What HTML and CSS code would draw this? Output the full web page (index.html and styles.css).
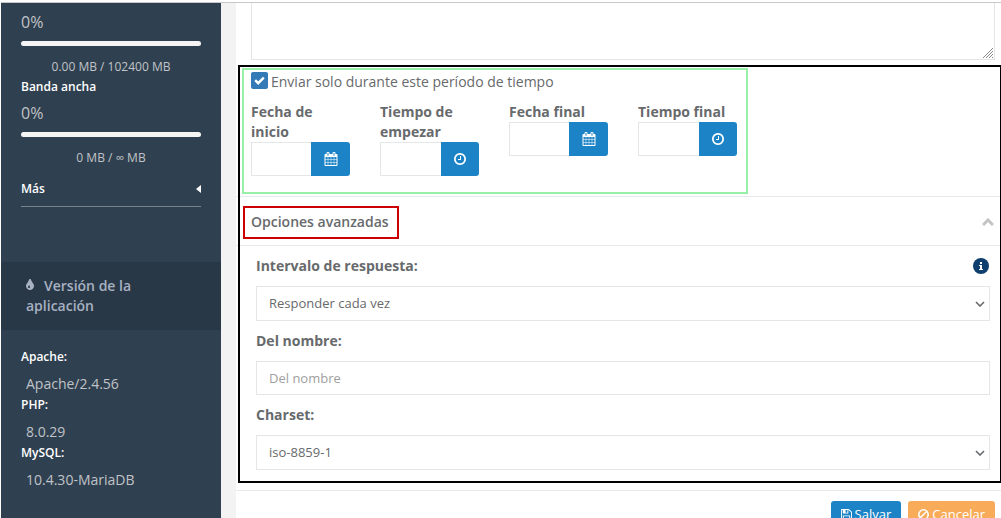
FILE: index.html
```
<!DOCTYPE html>
<html lang="es">
<head>
    <meta charset="UTF-8">
    <title>Respuesta automática</title>
    <link rel="stylesheet" href="styles.css">
</head>
<body>
    <!-- Shared icons -->
    <svg class="sprite" aria-hidden="true">
        <symbol id="icon-calendar" viewBox="0 0 1792 1792">
            <path d="M192 1664h288v-288h-288v288zm352 0h320v-288h-320v288zm-352-352h288v-320h-288v320zm352 0h320v-320h-320v320zm-352-384h288v-288h-288v288zm736 736h320v-288h-320v288zm-384-736h320v-288h-320v288zm768 736h288v-288h-288v288zm-384-352h320v-320h-320v320zm-352-864v-288q0-13-9.5-22.5t-22.5-9.5h-64q-13 0-22.5 9.5t-9.5 22.5v288q0 13 9.5 22.5t22.5 9.5h64q13 0 22.5-9.5t9.5-22.5zm736 864h288v-320h-288v320zm-384-384h320v-288h-320v288zm384 0h288v-288h-288v288zm32-480v-288q0-13-9.5-22.5t-22.5-9.5h-64q-13 0-22.5 9.5t-9.5 22.5v288q0 13 9.5 22.5t22.5 9.5h64q13 0 22.5-9.5t9.5-22.5zm384-64v1280q0 52-38 90t-90 38h-1408q-52 0-90-38t-38-90v-1280q0-52 38-90t90-38h128v-96q0-66 47-113t113-47h64q66 0 113 47t47 113v96h384v-96q0-66 47-113t113-47h64q66 0 113 47t47 113v96h128q52 0 90 38t38 90z"/>
        </symbol>
        <symbol id="icon-clock" viewBox="0 0 1792 1792">
            <path d="M1024 544v448q0 14-9 23t-23 9h-320q-14 0-23-9t-9-23v-64q0-14 9-23t23-9h224v-352q0-14 9-23t23-9h64q14 0 23 9t9 23zm416 352q0-148-73-273t-198-198-273-73-273 73-198 198-73 273 73 273 198 198 273 73 273-73 198-198 73-273zm224 0q0 209-103 385.5t-279.5 279.5-385.5 103-385.5-103-279.5-279.5-103-385.5 103-385.5 279.5-279.5 385.5-103 385.5 103 279.5 279.5 103 385.5z"/>
        </symbol>
        <symbol id="icon-save" viewBox="128 128 1536 1536">
            <path d="M512 1536h768v-384h-768v384zm896 0h128v-896q0-14-10-38.5t-20-34.5l-281-281q-10-10-34-20t-39-10v416q0 40-28 68t-68 28h-576q-40 0-68-28t-28-68v-416h-128v1280h128v-416q0-40 28-68t68-28h832q40 0 68 28t28 68v416zm-384-928v-320q0-13-9.5-22.5t-22.5-9.5h-192q-13 0-22.5 9.5t-9.5 22.5v320q0 13 9.5 22.5t22.5 9.5h192q13 0 22.5-9.5t9.5-22.5zm640 32v928q0 40-28 68t-68 28h-1344q-40 0-68-28t-28-68v-1344q0-40 28-68t68-28h928q40 0 88 20t76 48l280 280q28 28 48 76t20 88z"/>
        </symbol>
        <symbol id="icon-tint" viewBox="384 128 1024 1536">
            <path d="M896 1152q0-36-20-69-1-1-15.5-22.5t-25.5-38-25-44-21-50.5q-4-16-21-16t-21 16q-7 23-21 50.5t-25 44-25.5 38-15.5 22.5q-20 33-20 69 0 53 37.5 90.5t90.5 37.5 90.5-37.5 37.5-90.5zm512-128q0 212-150 362t-362 150-362-150-150-362q0-145 81-275 6-9 62.5-90.5t101-151 99.5-178 83-201.5q9-30 34-47t51-17 51.5 17 33.5 47q28 93 83 201.5t99.5 178 101 151 62.5 90.5q81 127 81 275z"/>
        </symbol>
        <symbol id="icon-ban" viewBox="0 0 12 12">
            <path d="M6 .9a5.1 5.1 0 1 0 0 10.2A5.1 5.1 0 0 0 6 .9zM9.6 2.4L2.4 9.6" fill="none" stroke="currentColor" stroke-width="1.7"/>
        </symbol>
        <symbol id="icon-arrow" viewBox="0 0 10 6">
            <path d="M1 1l4 4 4-4" fill="none" stroke="currentColor" stroke-width="1.6"/>
        </symbol>
    </svg>

    <div class="page">
        <!-- Sidebar -->
        <aside class="sidebar">
            <section class="stats">
                <div class="stat-value">0%</div>
                <div class="stat-bar"></div>
                <div class="stat-text">0.00 MB / 102400 MB</div>
                <div class="stat-title">Banda ancha</div>
                <div class="stat-value">0%</div>
                <div class="stat-bar"></div>
                <div class="stat-text">0 MB / ∞ MB</div>
                <a href="#" class="more">Más
                    <svg class="caret" viewBox="0 0 5 8"><path d="M5 0v8L0 4z"/></svg>
                </a>
            </section>
            <h2 class="version-title"><svg class="icon tint"><use href="#icon-tint"/></svg>Versión de la aplicación</h2>
            <dl class="versions">
                <dt>Apache:</dt>
                <dd>Apache/2.4.56</dd>
                <dt>PHP:</dt>
                <dd>8.0.29</dd>
                <dt>MySQL:</dt>
                <dd>10.4.30-MariaDB</dd>
            </dl>
        </aside>

        <!-- Autoresponder form -->
        <form class="content">
            <div class="message">
                <textarea aria-label="Mensaje"></textarea>
                <svg class="grip" viewBox="0 0 10 10"><path d="M0 10L10 0M3 10l7-7M6 10l4-4M9 10l1-1"/></svg>
            </div>

            <div class="highlight">
                <section class="period">
                    <div class="check-row">
                        <span class="check">
                            <input type="checkbox" id="onlyPeriod" checked>
                            <svg class="tick" viewBox="0 0 11 9"><path d="M1.2 4.2l3 3L9.8 1.6"/></svg>
                        </span>
                        <label for="onlyPeriod">Enviar solo durante este período de tiempo</label>
                    </div>
                    <div class="period-fields">
                        <div class="field">
                            <label for="startDate">Fecha de inicio</label>
                            <div class="input-group">
                                <input type="text" id="startDate">
                                <button type="button" aria-label="Elegir fecha"><svg class="icon"><use href="#icon-calendar"/></svg></button>
                            </div>
                        </div>
                        <div class="field">
                            <label for="startTime">Tiempo de empezar</label>
                            <div class="input-group">
                                <input type="text" id="startTime">
                                <button type="button" class="time" aria-label="Elegir hora"><svg class="icon"><use href="#icon-clock"/></svg></button>
                            </div>
                        </div>
                        <div class="field">
                            <label for="endDate">Fecha final</label>
                            <div class="input-group">
                                <input type="text" id="endDate">
                                <button type="button" aria-label="Elegir fecha"><svg class="icon"><use href="#icon-calendar"/></svg></button>
                            </div>
                        </div>
                        <div class="field">
                            <label for="endTime">Tiempo final</label>
                            <div class="input-group">
                                <input type="text" id="endTime">
                                <button type="button" class="time" aria-label="Elegir hora"><svg class="icon"><use href="#icon-clock"/></svg></button>
                            </div>
                        </div>
                    </div>
                </section>

                <div class="advanced-header">
                    <h3>Opciones avanzadas</h3>
                    <svg class="chevron" viewBox="0 0 12 8"><path d="M1 7l5-5 5 5"/></svg>
                </div>

                <section class="advanced">
                    <div class="label-row">
                        <label for="interval">Intervalo de respuesta:</label>
                        <svg class="info" viewBox="0 0 16 16">
                            <circle cx="8" cy="8" r="8"/>
                            <path d="M7 4h2v2H7zM6 7h3v4h1v1H6v-1h1V8H6z"/>
                        </svg>
                    </div>
                    <div class="select">
                        <select id="interval">
                            <option>Responder cada vez</option>
                        </select>
                        <svg class="arrow"><use href="#icon-arrow"/></svg>
                    </div>
                    <div class="label-row">
                        <label for="fromName">Del nombre:</label>
                    </div>
                    <input type="text" id="fromName" placeholder="Del nombre">
                    <div class="label-row">
                        <label for="charset">Charset:</label>
                    </div>
                    <div class="select">
                        <select id="charset">
                            <option>iso-8859-1</option>
                        </select>
                        <svg class="arrow"><use href="#icon-arrow"/></svg>
                    </div>
                </section>
            </div>

            <div class="actions">
                <button type="submit" class="save"><svg class="icon"><use href="#icon-save"/></svg>Salvar</button>
                <button type="button" class="cancel"><svg class="icon"><use href="#icon-ban"/></svg>Cancelar</button>
            </div>
        </form>
    </div>
</body>
</html>
```

FILE: styles.css
```
*, *::after {
    box-sizing: border-box;
}
body {
    margin: 0;
    padding: 2px 0 0 1px;
    height: 100vh;
    overflow: hidden;
    background-color: #fff;
    color: #676a6c;
    font-family: "Open Sans", "Noto Sans", sans-serif;
    font-size: 14px;
    line-height: 20px;
}
input, select, textarea, button {
    font-family: inherit;
    font-size: 13px;
    color: inherit;
}
svg {
    fill: currentColor;
}
.sprite {
    display: none;
}
.page {
    display: flex;
    min-height: 100%;
    border-top: 1px solid #c8c8c8;
    background-color: #f3f3f4;
}

/* Sidebar */
.sidebar {
    flex: 0 0 220px;
    margin-right: 15px;
    background-color: #2f4050;
    color: #c0c3c7;
}
.stats {
    padding: 8px 20px 55px;
}
.stat-value {
    font-size: 16px;
    line-height: 22px;
}
.stat-bar {
    height: 5px;
    margin: 8px 0 11px;
    border-radius: 3px;
    background-color: #f5f5f5;
}
.stat-text {
    font-size: 12px;
    text-align: center;
}
.stat-title {
    margin-bottom: 5px;
    font-size: 12px;
    font-weight: 600;
    color: #fff;
}
.more {
    display: flex;
    justify-content: space-between;
    align-items: center;
    margin-top: 11px;
    padding-bottom: 7px;
    border-bottom: 1px solid #77828e;
    font-size: 12px;
    font-weight: 600;
    color: #fff;
    text-decoration: none;
}
.caret {
    width: 5px;
    height: 8px;
}
.version-title {
    margin: 0;
    padding: 14px 60px 14px 25px;
    background-color: #293846;
    color: #a7b1c2;
    font-size: 14px;
    font-weight: 600;
}
.tint {
    width: 8px;
    height: 12px;
    margin-right: 10px;
}
.versions {
    margin: 0;
    padding: 17px 20px;
}
.versions dt {
    font-size: 12px;
    font-weight: 600;
    color: #fff;
}
.versions dd {
    margin: 7px 5px 1px;
}

/* Form */
.content {
    flex: 1;
    min-width: 0;
    background-color: #fff;
}
.message {
    position: relative;
    margin: 0 6px 0 15px;
}
textarea {
    display: block;
    width: 100%;
    height: 57px;
    border: 1px solid #e5e6e7;
    border-top: 0;
    resize: none;
}
.grip {
    position: absolute;
    right: 2px;
    bottom: 2px;
    width: 10px;
    height: 10px;
    stroke: #888;
}

/* Black outline over the highlighted part of the form */
.highlight {
    position: relative;
    margin-top: 5px;
}
.highlight::after {
    content: "";
    position: absolute;
    inset: 0 -1px -1px 2px;
    border: 2px solid #000;
    pointer-events: none;
}
.period {
    position: relative;
    padding: 7px 15px 20px;
}
.period::after {
    content: "";
    position: absolute;
    top: 3px;
    bottom: 2px;
    left: 6px;
    width: 506px;
    border: 2px solid #98f0a8;
    pointer-events: none;
}
.check-row {
    display: flex;
    align-items: flex-start;
    gap: 3px;
    height: 20px;
    margin-bottom: 10px;
}
.check {
    position: relative;
    width: 17px;
    height: 17px;
}
.check input {
    appearance: none;
    display: block;
    width: 17px;
    height: 17px;
    margin: 0;
    border-radius: 2px;
    background-color: #337ab7;
}
.tick {
    position: absolute;
    top: 4px;
    left: 3px;
    width: 11px;
    height: 9px;
    fill: none;
    stroke: #fff;
    stroke-width: 2.4;
}
.period-fields {
    display: flex;
    align-items: flex-start;
    gap: 30px;
}
.field {
    width: 99px;
}
.field label, .label-row label {
    display: block;
    font-weight: 700;
}
.input-group {
    display: flex;
}
.input-group input {
    flex: 1;
    min-width: 0;
    height: 34px;
    border: 1px solid #e5e6e7;
    border-right: 0;
}
.input-group button {
    display: flex;
    align-items: center;
    justify-content: center;
    width: 39px;
    height: 34px;
    padding: 0;
    border: 0;
    border-radius: 0 3px 3px 0;
    background-color: #1c84c6;
    color: #fff;
}
.input-group .time {
    width: 38px;
}
.input-group .icon {
    width: 14px;
    height: 14px;
}
.advanced-header {
    display: flex;
    justify-content: space-between;
    align-items: center;
    height: 50px;
    padding: 2px 7px 0;
    border: 1px solid #e7eaec;
    border-width: 1px 0;
}
.advanced-header h3 {
    margin: 0;
    padding: 4px 8px 5px 6px;
    border: 2px solid #cc0000;
    font-size: 14px;
    font-weight: 600;
}
.chevron {
    width: 12px;
    height: 8px;
    fill: none;
    stroke: #c4c4c4;
    stroke-width: 3;
}
.advanced {
    padding: 10px 11px 12px 20px;
}
.label-row {
    display: flex;
    justify-content: space-between;
    align-items: center;
    height: 20px;
    margin: 10px 0;
}
.label-row:first-child {
    margin-top: 0;
    padding-right: 1px;
}
.info {
    width: 16px;
    height: 16px;
    fill: #0f3f6e;
}
.info path {
    fill: #fff;
}
.select {
    position: relative;
}
.select select {
    appearance: none;
    display: block;
    width: 100%;
    height: 35px;
    padding: 0 12px 1px;
    border: 1px solid #e5e6e7;
    border-radius: 0;
    background-color: #fff;
}
.arrow {
    position: absolute;
    top: 15px;
    right: 5px;
    width: 10px;
    height: 6px;
    pointer-events: none;
}
.advanced > input {
    display: block;
    width: 100%;
    height: 34px;
    padding: 0 12px;
    border: 1px solid #e5e6e7;
}
.advanced > input::placeholder {
    color: #a0a0a0;
}
.actions {
    display: flex;
    justify-content: flex-end;
    gap: 7px;
    margin-top: 8px;
    padding: 10px 6px 10px 15px;
    border-top: 1px solid #e7eaec;
}
.actions button {
    display: flex;
    align-items: center;
    gap: 3px;
    height: 26px;
    padding: 0 10px;
    border: 0;
    border-radius: 3px;
    color: #fff;
    font-size: 13px;
}
.actions .save {
    background-color: #1c84c6;
}
.actions .cancel {
    background-color: #f8ac59;
}
.actions .icon {
    width: 11px;
    height: 11px;
}
```
